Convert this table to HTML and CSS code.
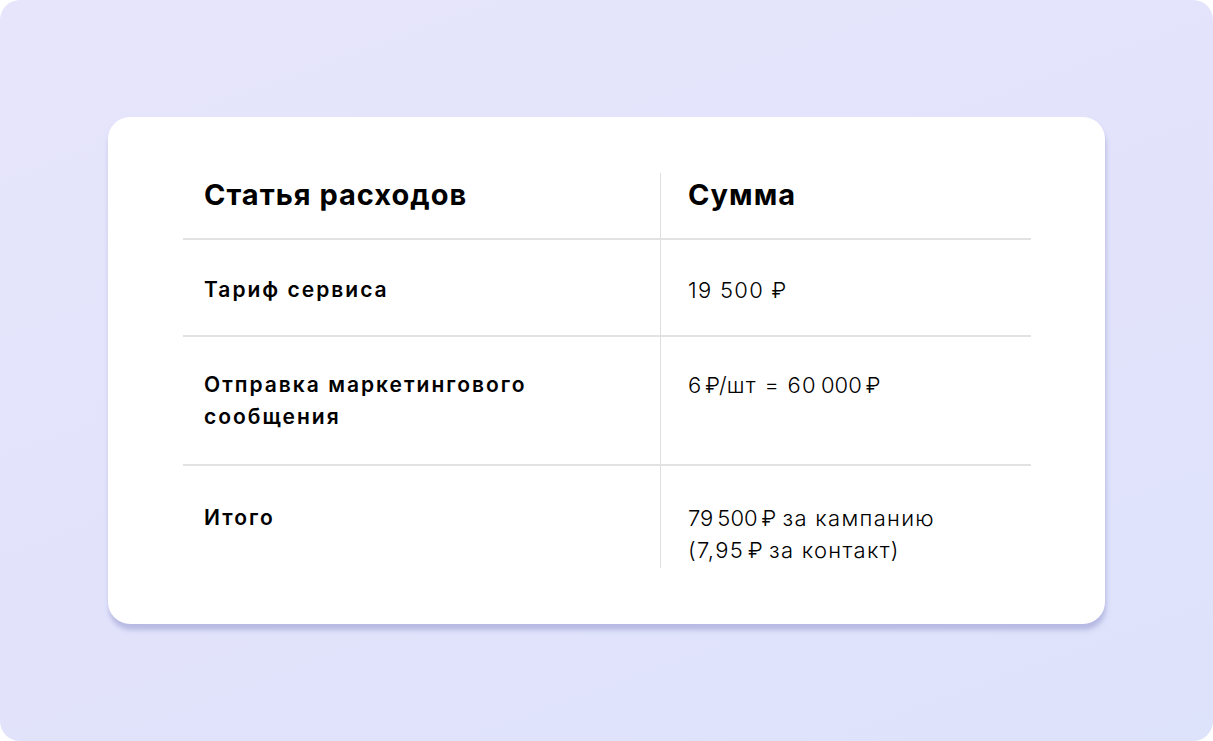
FILE: index.html
```html
<!DOCTYPE html>
<html lang="ru">
<head>
<meta charset="utf-8">
<title>Статья расходов</title>
<link rel="stylesheet" href="styles.css">
</head>
<body>
<div class="frame">
  <div class="card">
    <div class="table">
      <div class="cell head c1">Статья расходов</div>
      <div class="cell head c2">Сумма</div>

      <div class="cell row r1 c1 name">Тариф сервиса</div>
      <div class="cell row r1 c2 val">19 500 ₽</div>

      <div class="cell row r2 c1 name">Отправка маркетингового<br>сообщения</div>
      <div class="cell row r2 c2 val">6&#8239;₽/шт = 60&#8239;000&#8239;₽</div>

      <div class="cell row r3 c1 name">Итого</div>
      <div class="cell row r3 c2 val">79&#8239;500&#8239;₽ за кампанию<br>(7,95&#8239;₽ за контакт)</div>
    </div>
  </div>
</div>
</body>
</html>
```

FILE: styles.css
```css
html, body {
  margin: 0;
  padding: 0;
  background: #ffffff;
}

body {
  font-family: "Inter", "Noto Sans", sans-serif;
  color: #000;
}

.frame {
  width: 1213px;
  height: 741px;
  border-radius: 20px;
  background: linear-gradient(160deg, #e6e5fc 0%, #e2e3fb 55%, #dde3fb 100%);
  display: flex;
  align-items: center;
  justify-content: center;
}

.card {
  width: 997px;
  height: 507px;
  box-sizing: border-box;
  background: #fff;
  border-radius: 22px;
  box-shadow: 1px 6px 5px rgba(150, 152, 205, 0.55);
  padding: 56px 74px 56px 75px;
}

.table {
  display: grid;
  grid-template-columns: 478px 370px;
}

.cell {
  box-sizing: border-box;
}

.c1 {
  padding-left: 21px;
  border-right: 1px solid #dedede;
}

.c2 {
  padding-left: 27px;
}

.head {
  font-weight: 700;
  font-size: 29px;
  line-height: 36px;
  letter-spacing: 1px;
  height: 67px;
  padding-top: 4px;
  border-bottom: 2px solid #e2e2e2;
}

.row {
  font-size: 21px;
  line-height: 32px;
}

.name {
  font-weight: 600;
  letter-spacing: 2px;
}

.val {
  font-size: 22px;
  font-weight: 300;
  letter-spacing: 1.3px;
}

.r1 {
  height: 97px;
  padding-top: 34px;
  border-bottom: 2px solid #e2e2e2;
}

.r2 {
  height: 129px;
  padding-top: 32px;
  border-bottom: 2px solid #e2e2e2;
}

.r3 {
  height: 102px;
  padding-top: 36px;
}
```
